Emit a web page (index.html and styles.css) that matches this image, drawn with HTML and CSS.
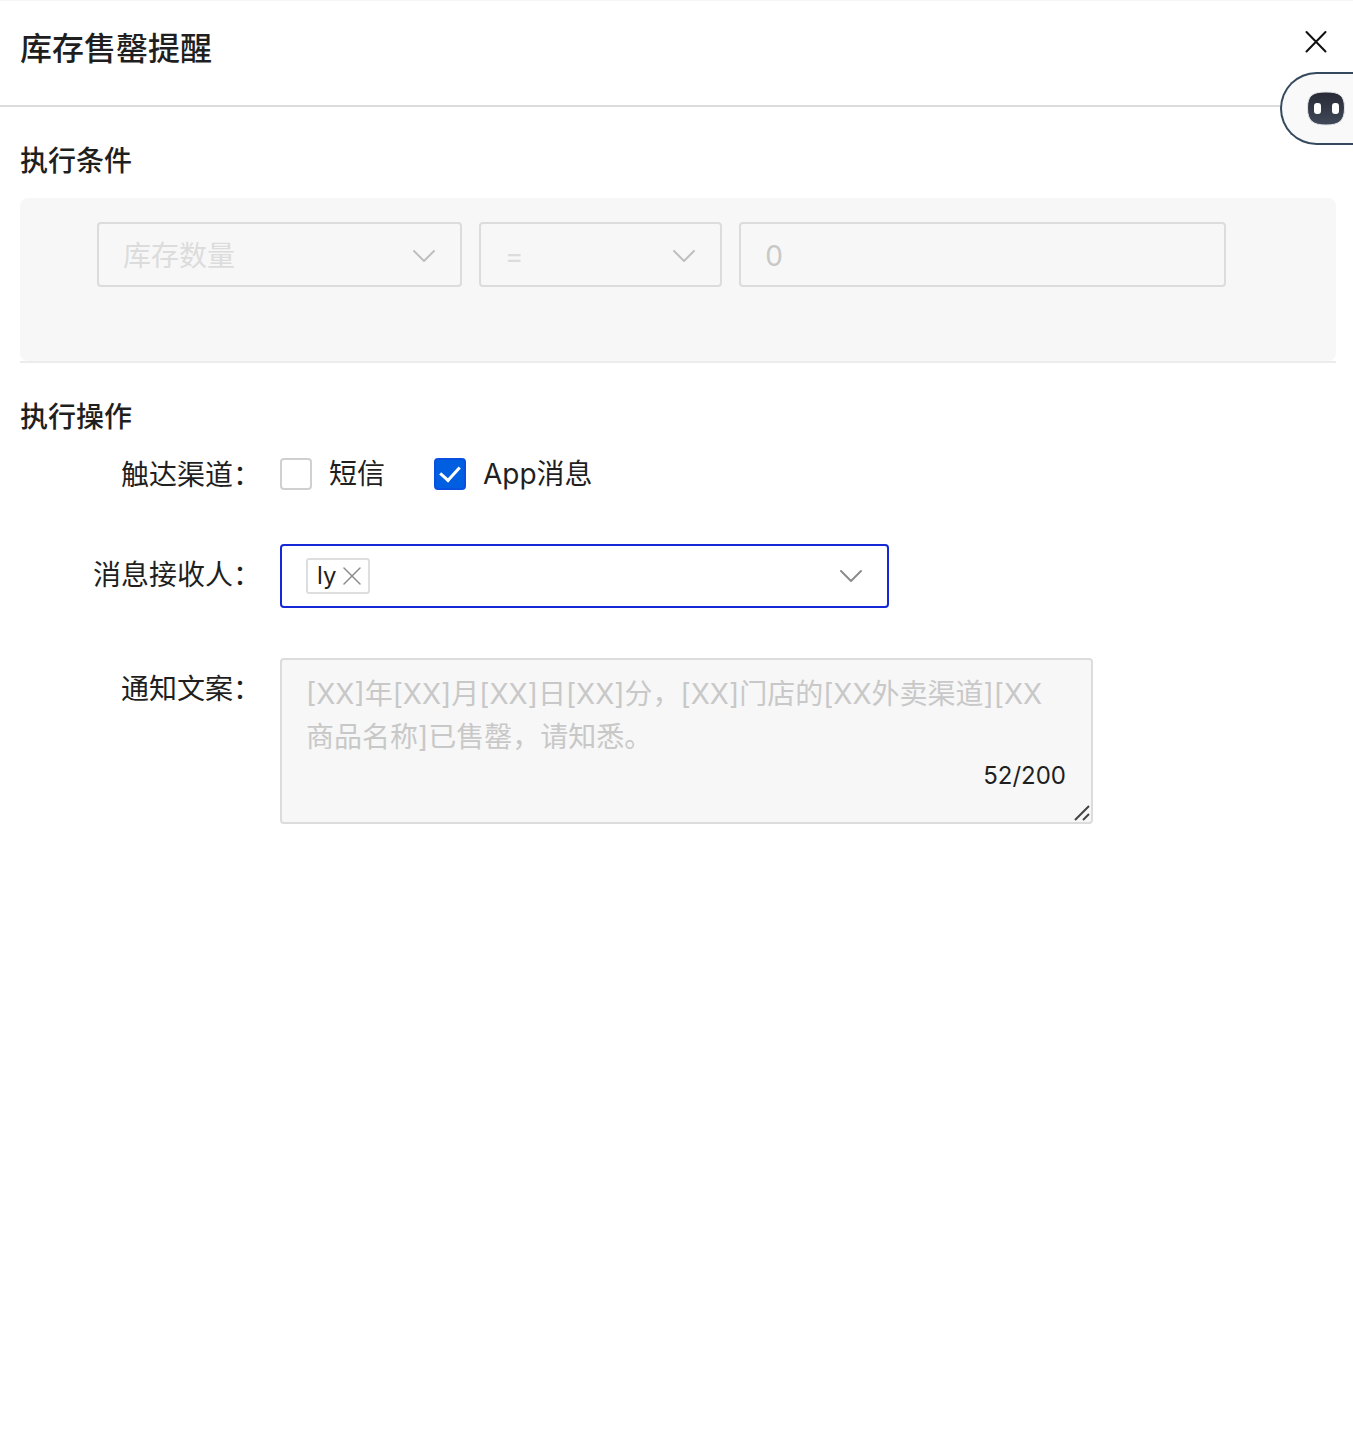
FILE: index.html
```html
<!DOCTYPE html>
<html lang="zh-CN">
<head>
<meta charset="utf-8">
<meta name="viewport" content="width=device-width, initial-scale=1">
<title>库存售罄提醒</title>
<link rel="stylesheet" href="styles.css">
</head>
<body>
<header class="drawer-header">
  <h1 class="drawer-title">库存售罄提醒</h1>
  <button class="close-button" type="button" aria-label="关闭">
    <svg width="24" height="24" viewBox="0 0 24 24" fill="none" stroke="currentColor" stroke-width="2" stroke-linecap="round"><path d="M2.500 2 21.500 21.500M21.500 2 2.500 21.500"/></svg>
  </button>
</header>

<button class="assistant" type="button" aria-label="智能助手">
  <svg width="42" height="38" viewBox="0 0 42 38">
    <defs><linearGradient id="face" x1="0" y1="0" x2="0" y2="1"><stop offset="0" stop-color="#272a35"/><stop offset="1" stop-color="#414958"/></linearGradient></defs>
    <path d="M21 2C34 2 39.500 5 39.500 18S34 35 21 35 2.500 31 2.500 18 8 2 21 2Z" fill="url(#face)" stroke="#e4e5e8" stroke-width="1"/>
    <rect x="9" y="13" width="7" height="11" rx="3" fill="#fff"/>
    <rect x="27" y="13" width="7" height="11" rx="3" fill="#fff"/>
  </svg>
</button>

<main class="drawer-body">
  <section class="conditions">
    <h2 class="section-title">执行条件</h2>
    <div class="condition-panel">
      <div class="select-wrap">
        <select class="control select" aria-label="条件字段" disabled><option>库存数量</option></select>
        <svg class="chevron" width="24" height="14" viewBox="0 0 24 14"><path d="M2 2 12 12 22 2"/></svg>
      </div>
      <div class="select-wrap">
        <select class="control select" aria-label="比较方式" disabled><option>=</option></select>
        <svg class="chevron" width="24" height="14" viewBox="0 0 24 14"><path d="M2 2 12 12 22 2"/></svg>
      </div>
      <input class="control number" type="text" aria-label="条件数值" value="0" disabled>
    </div>
  </section>

  <section class="actions">
    <h2 class="section-title">执行操作</h2>
    <form class="form">
      <div class="form-row" role="group" aria-labelledby="channel-label">
        <span class="form-label compact" id="channel-label">触达渠道：</span>
        <div class="checks">
          <label class="check"><input class="checkbox" type="checkbox">短信</label>
          <label class="check"><input class="checkbox" type="checkbox" checked>App消息</label>
        </div>
      </div>
      <div class="form-row">
        <label class="form-label" for="receiver">消息接收人：</label>
        <div class="receiver-box">
          <span class="tag">ly<button class="tag-remove" type="button" aria-label="移除 ly"><svg width="18" height="18" viewBox="0 0 18 18" fill="none" stroke="currentColor" stroke-width="1.500" stroke-linecap="round"><path d="M1 1 17 17M17 1 1 17"/></svg></button></span>
          <input class="receiver-input" id="receiver" type="text" role="combobox" aria-expanded="false" autocomplete="off">
          <svg class="chevron active" width="24" height="14" viewBox="0 0 24 14"><path d="M2 2 12 12 22 2"/></svg>
        </div>
      </div>
      <div class="form-row">
        <label class="form-label" for="notice">通知文案：</label>
        <div class="notice-box">
          <textarea class="notice" id="notice" disabled>[XX]年[XX]月[XX]日[XX]分，[XX]门店的[XX外卖渠道][XX商品名称]已售罄，请知悉。</textarea>
          <span class="counter">52/200</span>
          <svg class="grip" width="16" height="16" viewBox="0 0 16 16"><path d="M1 15 15 1M9 15 15 9"/></svg>
        </div>
      </div>
    </form>
  </section>
</main>
</body>
</html>
```
FILE: styles.css
```css
* {
  box-sizing: border-box;
}

body {
  margin: 0;
  background: #fff;
  color: #1f1f1f;
  font-family: Inter, "Noto Sans CJK SC", sans-serif;
  font-size: 28px;
  line-height: 40px;
}

button,
input,
select,
textarea {
  margin: 0;
  font: inherit;
  color: inherit;
}

button {
  padding: 0;
  border: 0;
  background: none;
  cursor: pointer;
}

svg {
  display: block;
}

.drawer-header {
  display: flex;
  justify-content: space-between;
  align-items: flex-start;
  padding: 24px 25px 33px 20px;
  border-top: 1px solid #f5f5f5;
  border-bottom: 2px solid #dcdcdc;
}

.drawer-title {
  margin: 0;
  font-size: 32px;
  font-weight: 500;
  line-height: 47px;
}

.close-button {
  margin-top: 5px;
  color: #111;
}

.assistant {
  position: fixed;
  top: 72px;
  right: 0;
  display: flex;
  align-items: center;
  width: 73px;
  height: 73px;
  padding-left: 23px;
  border: 2px solid #34495e;
  border-right: 0;
  border-radius: 37px 0 0 37px;
  background: #f9f9fa;
}

.drawer-body {
  padding: 34px 17px 40px 20px;
}

.section-title {
  margin: 0 0 17px;
  font-size: 28px;
  font-weight: 500;
}

.conditions {
  border-bottom: 2px solid #ececec;
}

.condition-panel {
  display: grid;
  grid-template-columns: 3fr 2fr 4fr;
  gap: 17px;
  padding: 24px 110px 74px 77px;
  border-radius: 8px;
  background: #f7f7f7;
}

.select-wrap {
  position: relative;
}

.control {
  display: block;
  width: 100%;
  min-width: 0;
  height: 65px;
  padding: 2px 24px 0;
  border: 2px solid #dcdcdc;
  border-radius: 4px;
  background: #f7f7f7;
  color: #dcdcdc;
  opacity: 1;
}

.select {
  appearance: none;
}

.number {
  color: #c8c8c8;
}

.chevron {
  fill: none;
  stroke: #bfbfbf;
  stroke-width: 2;
  stroke-linecap: round;
  stroke-linejoin: round;
}

.select-wrap .chevron {
  position: absolute;
  top: 27px;
  right: 26px;
  pointer-events: none;
}

.chevron.active {
  stroke: #8c8c8c;
}

.actions {
  margin-top: 34px;
}

.form {
  display: grid;
  gap: 50px;
}

.form-row {
  display: grid;
  grid-template-columns: 241px minmax(0, 1fr);
  column-gap: 19px;
  align-items: start;
}

.form-label {
  line-height: 62px;
  text-align: right;
}

.form-label.compact {
  height: 40px;
  line-height: 42px;
}

.checks {
  display: flex;
  gap: 49px;
  height: 40px;
}

.check {
  display: flex;
  align-items: center;
  gap: 17px;
}

.checkbox {
  appearance: none;
  display: grid;
  place-items: center;
  width: 32px;
  height: 32px;
  border: 2px solid #d0d0d0;
  border-radius: 4px;
  background: #fff;
}

.checkbox:checked {
  border-color: #0a50e0;
  background: #005ee0;
}

.checkbox:checked::after {
  content: "";
  width: 9px;
  height: 16px;
  margin-bottom: 5px;
  border: solid #fff;
  border-width: 0 3px 3px 0;
  transform: rotate(42deg);
}

.receiver-box {
  display: flex;
  align-items: center;
  width: 100%;
  max-width: 609px;
  height: 64px;
  padding: 0 24px;
  border: 2px solid #1428d8;
  border-radius: 4px;
}

.tag {
  display: flex;
  align-items: center;
  gap: 7px;
  height: 36px;
  padding: 0 7px 0 9px;
  border: 2px solid #dedede;
  border-radius: 3px;
  font-size: 24px;
}

.tag-remove {
  color: #8c8c8c;
}

.receiver-input {
  flex: 1;
  min-width: 0;
  padding: 0 8px;
  border: 0;
  outline: 0;
  background: none;
}

.notice-box {
  position: relative;
  width: 100%;
  max-width: 813px;
}

.notice {
  display: block;
  width: 100%;
  height: 166px;
  padding: 13px 24px;
  border: 2px solid #dcdcdc;
  border-radius: 4px;
  background: #f7f7f7;
  color: #c8c8c8;
  line-height: 43px;
  resize: none;
}

.counter {
  position: absolute;
  right: 27px;
  bottom: 28px;
  font-size: 24px;
}

.grip {
  position: absolute;
  right: 3px;
  bottom: 3px;
  fill: none;
  stroke: #444;
  stroke-width: 2;
}
```
